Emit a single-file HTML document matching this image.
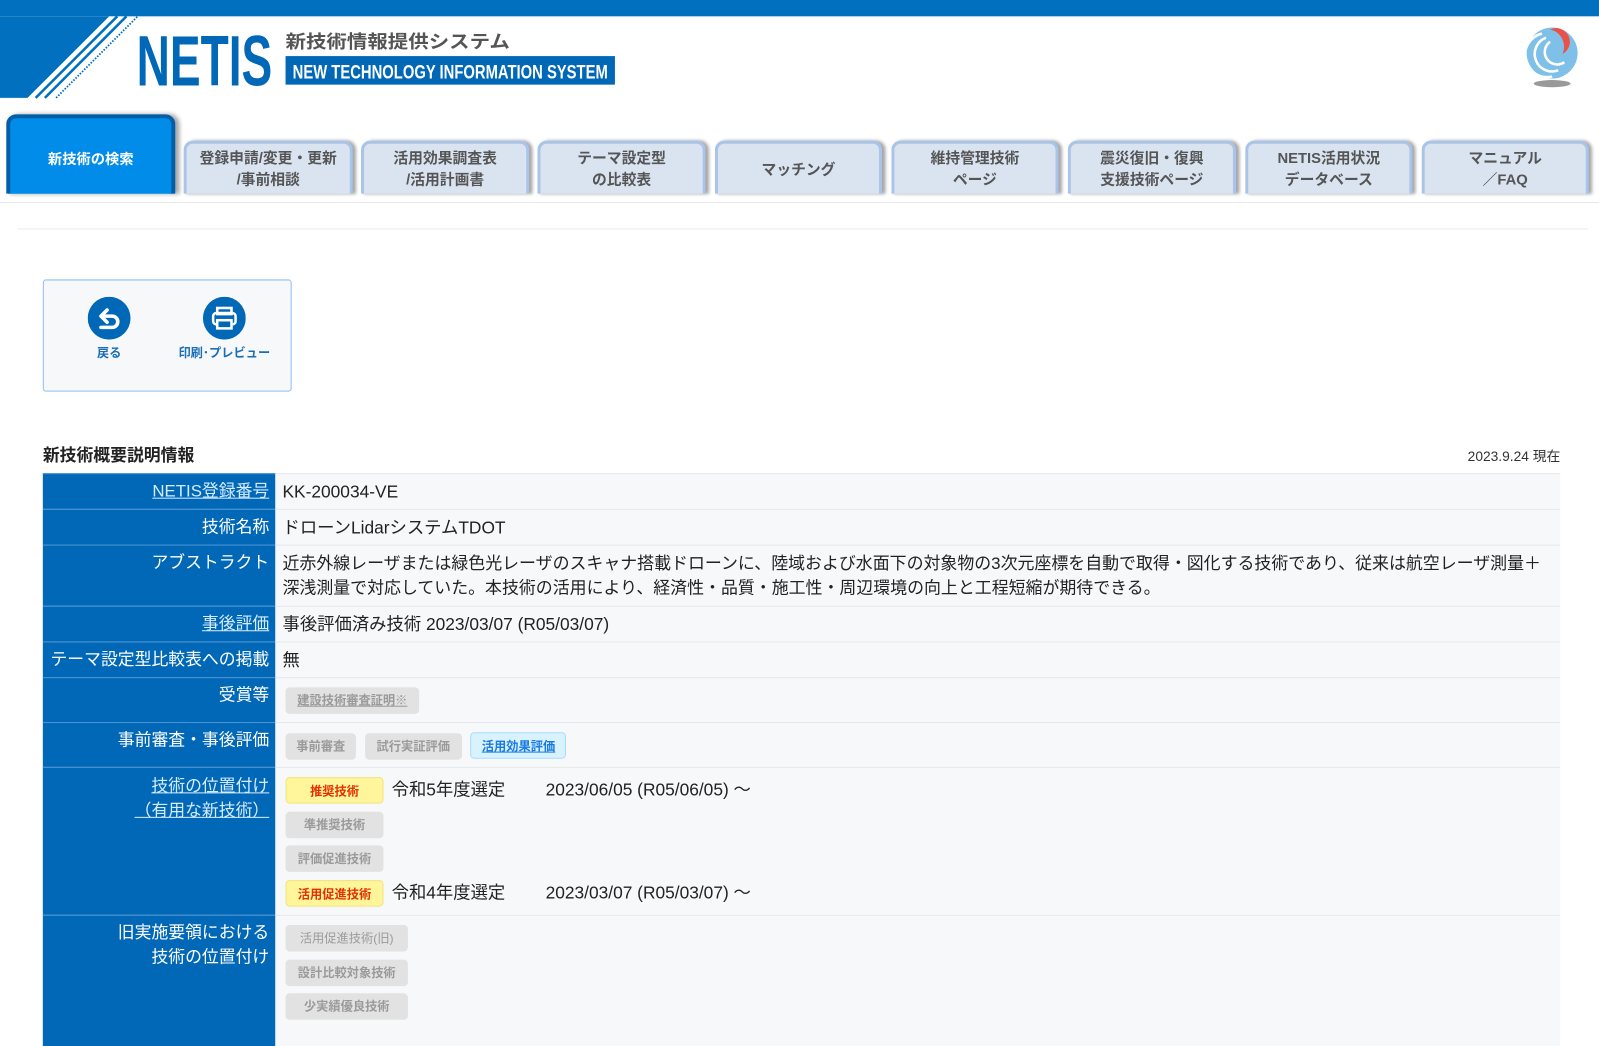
<!DOCTYPE html>
<html><head><meta charset="utf-8">
<style>
*{margin:0;padding:0;box-sizing:border-box}
body{width:1599px;height:1026px;overflow:hidden;background:#fff;font-family:"Liberation Sans","Noto Sans CJK JP",sans-serif;position:relative;color:#333}
#w{position:absolute;left:0;top:0;width:1568px;height:1006px;transform:scale(1.0198);transform-origin:0 0}
.abs{position:absolute}
.tab{position:absolute;top:138px;height:52px;background:#dae4f1;border:3px solid #a9c4e8;border-bottom:none;border-radius:9px 9px 0 0;box-shadow:3px 0 3px rgba(0,0,0,.35);text-align:center;font-size:14.5px;font-weight:bold;color:#555;line-height:21px;padding-top:5px;white-space:nowrap}
.hd{position:absolute;left:42px;width:228px;background:#0068b7;color:#fff;text-align:right;padding-right:6px;font-size:16.5px;border-top:1px solid #4e93d3;white-space:nowrap}
.hd a{color:#d6ecff;text-decoration:underline}
.vl{position:absolute;left:270px;width:1260px;background:#f7f8fa;border-top:1px solid #e6e8eb;font-size:17px;color:#222;padding-left:7px}
.b{display:inline-block;font-size:12px;font-weight:bold;color:#9a9a9a;background:#e2e2e2;border-radius:4px;padding:0 6px;height:26px;line-height:26px;text-align:center;white-space:nowrap}
.y{background:#fff59a;color:#e53000;border:1px solid #f5e27a}
</style></head><body>
<div id="w">
<div class="abs" style="left:0;top:0;width:1568px;height:16px;background:#0070bf"></div>
<svg class="abs" style="left:0;top:0" width="620" height="100">
<polygon points="0,16 107,16 27,96 0,96" fill="#0070bf"/>
<line x1="35" y1="96" x2="115" y2="16" stroke="#0070bf" stroke-width="2.5"/>
<line x1="44" y1="96" x2="124" y2="16" stroke="#0070bf" stroke-width="2.5"/>
<line x1="55" y1="96" x2="135" y2="16" stroke="#0070bf" stroke-width="1.8" stroke-dasharray="1.5 1.5"/>
<text x="134" y="84" font-family="Liberation Sans Narrow, Liberation Sans, sans-serif" font-weight="bold" font-size="70" fill="#0068b7" textLength="133" lengthAdjust="spacingAndGlyphs">NETIS</text>
<text x="280" y="47" font-family="Noto Sans CJK JP, sans-serif" font-weight="bold" font-size="18" fill="#555" textLength="220" lengthAdjust="spacingAndGlyphs">新技術情報提供システム</text>
<rect x="280" y="55" width="323" height="28" fill="#0068b7"/>
<text x="287" y="77" font-family="Liberation Sans Narrow, Liberation Sans, sans-serif" font-weight="bold" font-size="19" fill="#fff" textLength="309" lengthAdjust="spacingAndGlyphs">NEW TECHNOLOGY INFORMATION SYSTEM</text>
</svg>
<svg class="abs" style="left:1490px;top:25px" width="64" height="64">
<circle cx="32" cy="27" r="25" fill="#7fc0e8"/>
<path d="M22,8 A19,19 0 0 0 32,50" stroke="#fff" stroke-width="2.5" fill="none"/>
<path d="M26,12 A15,15 0 0 0 38,44" stroke="#fff" stroke-width="2.5" fill="none"/>
<path d="M30,16 A11,11 0 0 0 44,36" stroke="#fff" stroke-width="2.5" fill="none"/>
<path d="M30,4 A13,13 0 0 1 42,28 A17,17 0 0 0 30,4" fill="#e8524a"/>
<ellipse cx="32" cy="57" rx="18" ry="3.5" fill="#999"/>
</svg>
<div class="abs" style="left:6px;top:112px;width:166px;height:78px;background:#008ce8;border:4px solid #005fa8;border-bottom:none;border-radius:10px 10px 0 0;box-shadow:4px 0 4px rgba(0,0,0,.35);color:#fff;font-size:14px;font-weight:bold;text-align:center;padding-top:30px">新技術の検索</div>
<div class="tab" style="left:180px;width:166px">登録申請/変更・更新<br>/事前相談</div>
<div class="tab" style="left:354px;width:165px">活用効果調査表<br>/活用計画書</div>
<div class="tab" style="left:527px;width:165px">テーマ設定型<br>の比較表</div>
<div class="tab" style="left:701px;width:164px;padding-top:16px">マッチング</div>
<div class="tab" style="left:874px;width:164px">維持管理技術<br>ページ</div>
<div class="tab" style="left:1047px;width:165px">震災復旧・復興<br>支援技術ページ</div>
<div class="tab" style="left:1221px;width:164px">NETIS活用状況<br>データベース</div>
<div class="tab" style="left:1394px;width:164px">マニュアル<br>／FAQ</div>
<div class="abs" style="left:0;top:198px;width:1568px;height:1px;background:#e8e8e8"></div>
<div class="abs" style="left:17px;top:224px;width:1540px;height:1px;background:#ececec"></div>

<div class="abs" style="left:42px;top:274px;width:244px;height:110px;background:#f7f8fa;border:1px solid #8fc0f0;border-radius:3px"></div>
<svg class="abs" style="left:86px;top:291px" width="42" height="42"><circle cx="21" cy="21" r="21" fill="#0068b7"/><path d="M14,19 H24 A5.5,5.5 0 0 1 24,30 H13" stroke="#fff" stroke-width="3.5" fill="none" stroke-linecap="round"/><path d="M19,13 L13,19 L19,25" stroke="#fff" stroke-width="3.5" fill="none" stroke-linecap="round" stroke-linejoin="round"/></svg>
<svg class="abs" style="left:199px;top:291px" width="42" height="42"><circle cx="21" cy="21" r="21" fill="#0068b7"/><rect x="14" y="11" width="14" height="6" fill="none" stroke="#fff" stroke-width="2.5"/><rect x="10" y="16" width="22" height="11" rx="3" fill="none" stroke="#fff" stroke-width="2.5"/><rect x="14" y="23" width="14" height="8" fill="#0068b7" stroke="#fff" stroke-width="2.5"/></svg>
<div class="abs" style="left:80px;top:337px;width:54px;text-align:center;font-size:12px;font-weight:bold;color:#1a6fb8">戻る</div>
<div class="abs" style="left:165px;top:337px;width:110px;text-align:center;font-size:12px;font-weight:bold;color:#1a6fb8">印刷･プレビュー</div>

<div class="abs" style="left:42px;top:433px;font-size:16.5px;font-weight:bold;color:#222">新技術概要説明情報</div>
<div class="abs" style="left:1380px;top:436px;width:150px;text-align:right;font-size:13.5px;color:#333">2023.9.24 現在</div>

<div class="hd" style="top:464px;height:35px;line-height:35px"><a>NETIS登録番号</a></div>
<div class="vl" style="top:464px;height:35px;line-height:35px">KK-200034-VE</div>
<div class="hd" style="top:499px;height:35px;line-height:35px">技術名称</div>
<div class="vl" style="top:499px;height:35px;line-height:35px">ドローンLidarシステムTDOT</div>
<div class="hd" style="top:534px;height:60px;line-height:35px">アブストラクト</div>
<div class="vl" style="top:534px;height:60px;line-height:24px;padding-top:6px;white-space:nowrap;font-size:16.6px;overflow:hidden">近赤外線レーザまたは緑色光レーザのスキャナ搭載ドローンに、陸域および水面下の対象物の3次元座標を自動で取得・図化する技術であり、従来は航空レーザ測量＋<br>深浅測量で対応していた。本技術の活用により、経済性・品質・施工性・周辺環境の向上と工程短縮が期待できる。</div>
<div class="hd" style="top:594px;height:35px;line-height:35px"><a>事後評価</a></div>
<div class="vl" style="top:594px;height:35px;line-height:35px">事後評価済み技術 2023/03/07 (R05/03/07)</div>
<div class="hd" style="top:629px;height:35px;line-height:35px">テーマ設定型比較表への掲載</div>
<div class="vl" style="top:629px;height:35px;line-height:35px">無</div>
<div class="hd" style="top:664px;height:44px;line-height:35px">受賞等</div>
<div class="vl" style="top:664px;height:44px;padding-top:9px;padding-left:10px"><span class="b" style="text-decoration:underline;width:131px">建設技術審査証明※</span></div>
<div class="hd" style="top:708px;height:44px;line-height:35px">事前審査・事後評価</div>
<div class="vl" style="top:708px;height:44px;padding-top:9px;padding-left:10px"><span class="b" style="width:69px">事前審査</span> <span class="b" style="width:95px;margin-left:4px">試行実証評価</span> <span class="b" style="width:94px;margin-left:4px;background:#d8f3ff;border:1px solid #a9dcff;color:#1a7ae0;text-decoration:underline">活用効果評価</span></div>
<div class="hd" style="top:752px;height:145px;line-height:24px;padding-top:6px"><a>技術の位置付け<br>（有用な新技術）</a></div>
<div class="vl" style="top:752px;height:145px;padding-left:10px">
<div class="abs" style="left:10px;top:9px"><span class="b y" style="width:96px">推奨技術</span></div>
<div class="abs" style="left:114px;top:9px;line-height:26px">令和5年度選定</div>
<div class="abs" style="left:265px;top:9px;line-height:26px">2023/06/05 (R05/06/05) ～</div>
<div class="abs" style="left:10px;top:43px"><span class="b" style="width:96px">準推奨技術</span></div>
<div class="abs" style="left:10px;top:76px"><span class="b" style="width:96px">評価促進技術</span></div>
<div class="abs" style="left:10px;top:110px"><span class="b y" style="width:96px">活用促進技術</span></div>
<div class="abs" style="left:114px;top:110px;line-height:26px">令和4年度選定</div>
<div class="abs" style="left:265px;top:110px;line-height:26px">2023/03/07 (R05/03/07) ～</div>
</div>
<div class="hd" style="top:897px;height:129px;line-height:24px;padding-top:5px">旧実施要領における<br>技術の位置付け</div>
<div class="vl" style="top:897px;height:129px">
<div class="abs" style="left:10px;top:9px"><span class="b" style="width:120px;font-weight:normal">活用促進技術(旧)</span></div>
<div class="abs" style="left:10px;top:43px"><span class="b" style="width:120px">設計比較対象技術</span></div>
<div class="abs" style="left:10px;top:76px"><span class="b" style="width:120px">少実績優良技術</span></div>
</div>
</div>
</body></html>
